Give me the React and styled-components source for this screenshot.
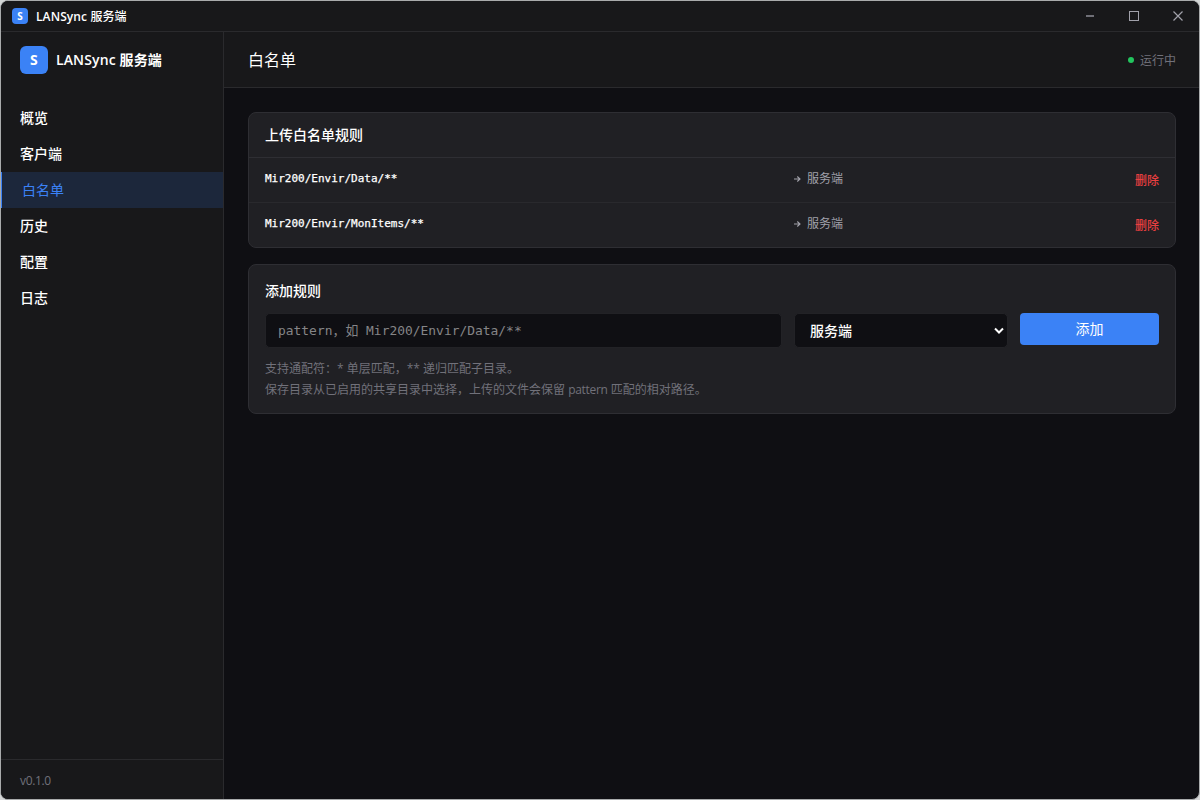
import styled, { createGlobalStyle, ThemeProvider } from 'styled-components';

const theme = {
  bg: '#0f0f13',
  surface: '#18181a',
  card: '#202024',
  line: '#2a2a2d',
  cardLine: '#2e2e33',
  text: '#ffffff',
  sub: '#a1a1aa',
  muted: '#71717a',
  accent: '#3b82f6',
  active: '#1c273b',
  danger: '#e93f40',
  ok: '#22c55e',
};

const GlobalStyle = createGlobalStyle`
* {
  box-sizing: border-box;
}
html, body, #root {
  height: 100%;
}
body {
  margin: 0;
  overflow: hidden;
  background: #d4d6d6;
  font-family: 'Open Sans', 'Noto Sans CJK SC', sans-serif;
  font-size: 14px;
}
h1, h2, h3, p, ul {
  margin: 0;
  padding: 0;
  list-style: none;
}
button, input {
  font-family: inherit;
}
`;

const Window = styled.div`
  display: flex;
  flex-direction: column;
  height: 100vh;
  border: 1px solid #a9abac;
  border-radius: 8px;
  overflow: hidden;
  color: ${props => props.theme.text};
  background: ${props => props.theme.bg};
`;
const TitleBar = styled.header`
  display: flex;
  align-items: center;
  flex: none;
  height: 31px;
  padding-left: 11px;
  border-bottom: 1px solid ${props => props.theme.line};
  background: ${props => props.theme.surface};
`;
const Logo = styled.span`
  display: flex;
  align-items: center;
  justify-content: center;
  width: ${props => props.$size}px;
  height: ${props => props.$size}px;
  margin-right: 8px;
  border-radius: ${props => (props.$size > 20 ? 6 : 4)}px;
  font-size: ${props => (props.$size > 20 ? 14 : 10)}px;
  line-height: 1;
  font-weight: 700;
  background: ${props => props.theme.accent};
`;
const WindowTitle = styled.span`
  flex: 1;
  padding-top: 2px;
  font-size: 12px;
  line-height: 16px;
  font-weight: 600;
  letter-spacing: 0.1px;

  span {
    font-weight: 500;
  }
`;
const WindowButtons = styled.div`
  display: flex;
  margin-right: -1px;
`;
const WindowButton = styled.button`
  display: flex;
  align-items: center;
  justify-content: center;
  width: 44px;
  height: 30px;
  padding: 0;
  border: 0;
  color: ${props => props.theme.sub};
  background: none;
`;
const Body = styled.div`
  display: flex;
  flex: 1;
  min-height: 0;
`;
const Sidebar = styled.aside`
  display: flex;
  flex-direction: column;
  width: 223px;
  border-right: 1px solid ${props => props.theme.line};
  background: ${props => props.theme.surface};
`;
const Brand = styled.div`
  display: flex;
  align-items: center;
  height: 56px;
  padding-left: 19px;
  font-size: 14px;
  font-weight: 600;
  letter-spacing: 0.13px;
  white-space: nowrap;

  b {
    font-weight: 700;
  }
`;
const BrandName = styled.span`
  padding-bottom: 2px;
`;
const Menu = styled.ul`
  flex: 1;
  padding-top: 12px;
`;
const MenuItem = styled.li`
  height: 36px;
  padding-left: ${props => (props.$active ? 20 : 19)}px;
  border-left: ${props => (props.$active ? `1px solid ${props.theme.accent}` : '0')};
  line-height: 36px;
  font-weight: ${props => (props.$active ? 400 : 500)};
  color: ${props => (props.$active ? props.theme.accent : props.theme.text)};
  background: ${props => (props.$active ? props.theme.active : 'none')};
`;
const Version = styled.div`
  height: 40px;
  padding-left: 19px;
  border-top: 1px solid ${props => props.theme.line};
  font-size: 12px;
  line-height: 42px;
  letter-spacing: -0.35px;
  color: ${props => props.theme.muted};
`;
const Content = styled.div`
  display: flex;
  flex-direction: column;
  flex: 1;
`;
const PageHeader = styled.div`
  display: flex;
  align-items: center;
  justify-content: space-between;
  height: 56px;
  padding: 0 23px 0 24px;
  border-bottom: 1px solid ${props => props.theme.line};
  background: ${props => props.theme.surface};

  h1 {
    font-size: 16px;
    line-height: 24px;
    font-weight: 400;
  }
`;
const Status = styled.div`
  display: flex;
  align-items: center;
  gap: 6px;
  font-size: 12px;
  color: ${props => props.theme.muted};

  &::before {
    content: '';
    width: 6px;
    height: 6px;
    border-radius: 50%;
    background: ${props => props.theme.ok};
  }
`;
const Main = styled.main`
  display: flex;
  flex-direction: column;
  gap: 16px;
  padding: 24px 23px 0 24px;
`;
const Card = styled.section`
  border: 1px solid ${props => props.theme.cardLine};
  border-radius: 8px;
  background: ${props => props.theme.card};
`;
const CardTitle = styled.h2`
  padding: 0 16px;
  font-size: 14px;
  line-height: 44px;
  font-weight: 500;
`;
const Rule = styled.div`
  display: grid;
  grid-template-columns: 528px 1fr auto;
  height: 45px;
  padding: 0 16px;
  border-top: 1px solid ${props => (props.$first ? props.theme.cardLine : '#29292d')};
  font-size: 12px;
  line-height: 41px;
`;
const Pattern = styled.span`
  font-family: 'DejaVu Sans Mono', monospace;
  font-size: 11px;
  line-height: 41px;
  -webkit-text-stroke: 0.25px;
`;
const Target = styled.span`
  display: flex;
  align-items: center;
  height: 41px;
  gap: 6px;
  color: ${props => props.theme.sub};
`;
const RemoveButton = styled.button`
  padding: 0;
  border: 0;
  font-size: 12px;
  line-height: 45px;
  font-weight: 500;
  color: ${props => props.theme.danger};
  background: none;
`;
const FormCard = styled(Card)`
  height: 150px;
  padding: 15px 16px;

  h2 {
    padding: 0;
    line-height: 22px;
  }
`;
const Fields = styled.div`
  display: grid;
  grid-template-columns: 517px 214px 139px;
  gap: 12px;
  align-items: start;
  height: 35px;
  margin-top: 11px;
`;
const PatternInput = styled.input`
  height: 35px;
  padding: 0 12px;
  border: 1px solid #222226;
  border-radius: 5px;
  outline: 0;
  font-family: 'DejaVu Sans Mono', 'Noto Sans CJK SC', monospace;
  font-size: 12.93px;
  color: ${props => props.theme.text};
  background: ${props => props.theme.bg};

  &::placeholder {
    color: #858587;
  }
`;
const Select = styled.button`
  display: flex;
  align-items: center;
  justify-content: space-between;
  height: 35px;
  padding: 0 3px 0 15px;
  border: 1px solid #222226;
  border-radius: 5px;
  font-size: 14px;
  font-weight: 500;
  color: ${props => props.theme.text};
  background: ${props => props.theme.bg};

  span {
    padding-bottom: 2px;
  }
`;
const AddButton = styled.button`
  height: 32px;
  padding: 0 0 2px;
  border: 0;
  border-radius: 4px;
  font-size: 14px;
  color: #fff;
  background: ${props => props.theme.accent};
`;
const Hint = styled.p`
  margin-top: 10px;
  font-size: 12px;
  line-height: 21px;
  color: ${props => props.theme.muted};

  span {
    letter-spacing: -0.3px;
  }
`;

const menu = ['概览', '客户端', '白名单', '历史', '配置', '日志'];
const rules = [
  { pattern: 'Mir200/Envir/Data/**', target: '服务端' },
  { pattern: 'Mir200/Envir/MonItems/**', target: '服务端' },
];

function App() {
  return (
    <ThemeProvider theme={theme}>
      <GlobalStyle />
      <Window>
        <TitleBar>
          <Logo $size={16}>S</Logo>
          <WindowTitle>
            LANSync <span>服务端</span>
          </WindowTitle>
          <WindowButtons>
            <WindowButton aria-label="minimize">
              <svg width="10" height="10">
                <path d="M1 5h8" stroke="#6f6f77" strokeWidth="2" />
              </svg>
            </WindowButton>
            <WindowButton aria-label="maximize">
              <svg width="10" height="10" fill="none" stroke="currentColor">
                <rect x="0.5" y="0.5" width="9" height="9" />
              </svg>
            </WindowButton>
            <WindowButton aria-label="close">
              <svg width="10" height="10" fill="none" stroke="currentColor" strokeWidth="1.2">
                <path d="M0.5 0.5l9 9M9.5 0.5l-9 9" />
              </svg>
            </WindowButton>
          </WindowButtons>
        </TitleBar>
        <Body>
          <Sidebar>
            <Brand>
              <Logo $size={28}>S</Logo>
              <BrandName>
                LANSync <b>服务端</b>
              </BrandName>
            </Brand>
            <Menu>
              {menu.map(name => (
                <MenuItem key={name} $active={name === '白名单'}>
                  {name}
                </MenuItem>
              ))}
            </Menu>
            <Version>v0.1.0</Version>
          </Sidebar>
          <Content>
            <PageHeader>
              <h1>白名单</h1>
              <Status>运行中</Status>
            </PageHeader>
            <Main>
              <Card>
                <CardTitle>上传白名单规则</CardTitle>
                {rules.map((rule, i) => (
                  <Rule key={rule.pattern} $first={i === 0}>
                    <Pattern>{rule.pattern}</Pattern>
                    <Target>
                      <svg width="8" height="8" fill="none" stroke="currentColor" strokeWidth="1.1">
                        <path d="M1 4h6M4.3 1.5L7 4L4.3 6.5" />
                      </svg>
                      {rule.target}
                    </Target>
                    <RemoveButton>删除</RemoveButton>
                  </Rule>
                ))}
              </Card>
              <FormCard>
                <CardTitle>添加规则</CardTitle>
                <Fields>
                  <PatternInput placeholder="pattern，如 Mir200/Envir/Data/**" />
                  <Select>
                    <span>服务端</span>
                    <svg width="10" height="8" fill="none" stroke="currentColor" strokeWidth="2">
                      <path d="M1 1.5L5 5.5L9 1.5" />
                    </svg>
                  </Select>
                  <AddButton>添加</AddButton>
                </Fields>
                <Hint>
                  支持通配符：* 单层匹配，** 递归匹配子目录。
                  <br />
                  保存目录从已启用的共享目录中选择，上传的文件会保留 <span>pattern</span> 匹配的相对路径。
                </Hint>
              </FormCard>
            </Main>
          </Content>
        </Body>
      </Window>
    </ThemeProvider>
  );
}

export default App;
